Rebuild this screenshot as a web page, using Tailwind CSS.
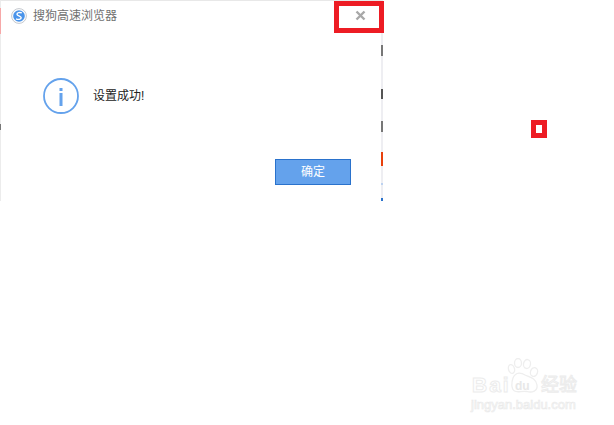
<!DOCTYPE html>
<html><head><meta charset="utf-8"><script src="https://cdn.jsdelivr.net/npm/@tailwindcss/browser@4"></script></head>
<body class="bg-white">
<div class="relative w-[614px] h-[425px] overflow-hidden bg-white font-['Liberation_Sans','Noto_Sans_CJK_SC',sans-serif]">
  <div class="relative w-[383px] h-[201px] border-t-[1px] border-t-[#e8e8e8] border-l-[1px] border-l-[#ececec] border-r-[2px] border-r-[#eeeef2] flex flex-col">
    <div class="flex items-center h-[30px] pl-[10px] gap-[6px]">
      <svg width="16" height="16" viewBox="0 0 16 16"><circle cx="8" cy="8" r="7.4" fill="#fff" stroke="#c4c8ce" stroke-width="1"/><circle cx="8" cy="8" r="5.8" fill="#4a94ea"/><path d="M10.8 4.9C9 4.2 6 4.6 6 6.2C6 8 10.2 7.6 10.2 9.8C10.2 11.6 7 11.8 5 10.8" fill="none" stroke="#fff" stroke-width="1.4"/></svg>
      <span class="text-[12px] leading-none text-[#707070]">搜狗高速浏览器</span>
    </div>
    <div class="flex items-center h-[70px] mt-[30px] pl-[42px] gap-[14px]">
      <svg width="36" height="36" viewBox="0 0 36 36"><circle cx="18" cy="18" r="17" fill="none" stroke="#64a2ec" stroke-width="1.8"/><rect x="16.5" y="10" width="3" height="3" fill="#64a2ec"/><rect x="16.5" y="15" width="3" height="13" fill="#64a2ec"/></svg>
      <span class="text-[12px] leading-none text-[#222]">设置成功!</span>
    </div>
    <div class="flex justify-end mt-[28px] pr-[30px]">
      <button class="w-[76px] h-[26px] bg-[#64a2ec] border border-[#2a72cc] text-white text-[12px] leading-none">确定</button>
    </div>
    <div class="absolute right-[15px] top-[9px] text-[#a8a8a8]">
      <svg width="11" height="11" viewBox="0 0 11 11"><path d="M1.5 1.5L9.5 9.5M9.5 1.5L1.5 9.5" stroke="currentColor" stroke-width="2.4"/></svg>
    </div>
  </div>
  <div class="absolute left-[334px] top-[1px] w-[50px] h-[32px] border-[5px] border-[#ed1c24]"></div>
  <div class="absolute left-[531px] top-[120px] w-[16px] h-[18px] border-[5px] border-[#ed1c24]"></div>

  <div class="absolute left-[0px] top-[8px] w-[1px] h-[26px] bg-[#f6a8a8]"></div>
  <div class="absolute left-[0px] top-[124px] w-[1px] h-[6px] bg-[#777]"></div>
  <div class="absolute left-[381px] top-[45px] w-[2px] h-[11px] bg-[#777]"></div>
  <div class="absolute left-[381px] top-[89px] w-[2px] h-[10px] bg-[#555]"></div>
  <div class="absolute left-[381px] top-[121px] w-[2px] h-[11px] bg-[#777]"></div>
  <div class="absolute left-[381px] top-[152px] w-[2px] h-[14px] bg-[#e8400c]"></div>
  <div class="absolute left-[381px] top-[183px] w-[2px] h-[2px] bg-[#bcd2f0]"></div>
  <div class="absolute left-[381px] top-[198px] w-[2px] h-[3px] bg-[#2a72cc]"></div>

  <div class="absolute left-[470px] top-[355px] w-[112px] h-[56px]">
    <svg class="absolute left-[37px] top-[3px]" width="32" height="36" viewBox="0 0 32 36" fill="none" stroke="#eeeeee" stroke-width="1.3">
      <ellipse cx="4.5" cy="11" rx="3" ry="4.5" transform="rotate(-15 4.5 11)"/>
      <ellipse cx="11" cy="5" rx="3.5" ry="4.5"/>
      <ellipse cx="20" cy="6" rx="3.5" ry="4.5" transform="rotate(10 20 6)"/>
      <ellipse cx="27" cy="14" rx="3.5" ry="4.5" transform="rotate(20 27 14)"/>
      <path d="M6 20C9 13 15 15 18 17C22 19 29 20 30 27C31 33 25 35 20 33.5C15 32.5 11 35 7.5 33C4 31 4.5 24 6 20Z"/>
    </svg>
    <span class="absolute left-[2px] top-[19px] text-[21px] leading-none font-bold tracking-[2px] text-white [-webkit-text-stroke:1px_#ececec]">Bai</span>
    <span class="absolute left-[45px] top-[25px] text-[12px] leading-none font-bold text-[#e8e8e8]">du</span>
    <span class="absolute left-[71px] top-[21px] text-[18px] leading-none text-white [-webkit-text-stroke:1px_#ececec]">经验</span>
    <span class="absolute left-[1px] top-[43px] text-[13px] leading-none text-white whitespace-nowrap [-webkit-text-stroke:0.7px_#eaeaea]">jingyan.baidu.com</span>
  </div>
</div>
</body></html>
